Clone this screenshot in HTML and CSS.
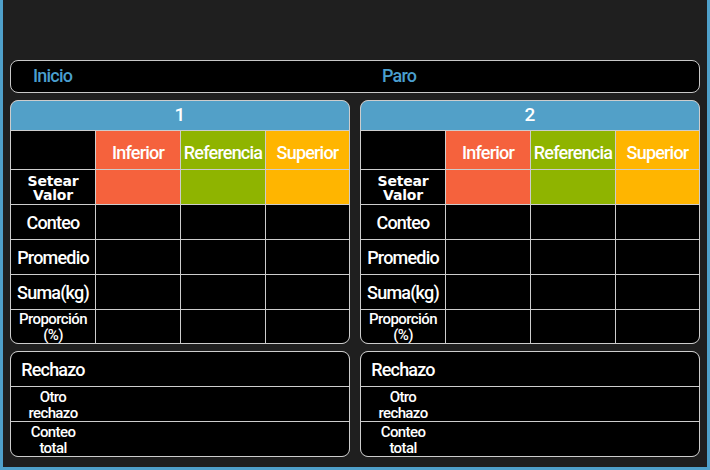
FILE: index.html
```html
<!DOCTYPE html>
<html lang="es">

<head>
    <meta charset="UTF-8">
    <meta name="viewport" content="width=device-width, initial-scale=1.0">
    <title>Panel</title>
    <link rel="stylesheet" href="styles.css">
</head>

<body>
    <div class="frame">
        <div class="topbar">
            <div class="top-item first">Inicio</div>
            <div class="top-item">Paro</div>
        </div>

        <div class="row">
            <div class="panel">
                <div class="head">1</div>
                <div class="grid">
                    <div class="cell"></div>
                    <div class="cell red big">Inferior</div>
                    <div class="cell green big">Referencia</div>
                    <div class="cell yellow big">Superior</div>

                    <div class="cell label small wide">Setear<br>Valor</div>
                    <div class="cell red"></div>
                    <div class="cell green"></div>
                    <div class="cell yellow"></div>

                    <div class="cell label">Conteo</div>
                    <div class="cell"></div>
                    <div class="cell"></div>
                    <div class="cell"></div>

                    <div class="cell label">Promedio</div>
                    <div class="cell"></div>
                    <div class="cell"></div>
                    <div class="cell"></div>

                    <div class="cell label">Suma(kg)</div>
                    <div class="cell"></div>
                    <div class="cell"></div>
                    <div class="cell"></div>

                    <div class="cell label small">Proporción<br>(%)</div>
                    <div class="cell"></div>
                    <div class="cell"></div>
                    <div class="cell"></div>
                </div>
            </div>

            <div class="panel">
                <div class="head">2</div>
                <div class="grid">
                    <div class="cell"></div>
                    <div class="cell red big">Inferior</div>
                    <div class="cell green big">Referencia</div>
                    <div class="cell yellow big">Superior</div>

                    <div class="cell label small wide">Setear<br>Valor</div>
                    <div class="cell red"></div>
                    <div class="cell green"></div>
                    <div class="cell yellow"></div>

                    <div class="cell label">Conteo</div>
                    <div class="cell"></div>
                    <div class="cell"></div>
                    <div class="cell"></div>

                    <div class="cell label">Promedio</div>
                    <div class="cell"></div>
                    <div class="cell"></div>
                    <div class="cell"></div>

                    <div class="cell label">Suma(kg)</div>
                    <div class="cell"></div>
                    <div class="cell"></div>
                    <div class="cell"></div>

                    <div class="cell label small">Proporción<br>(%)</div>
                    <div class="cell"></div>
                    <div class="cell"></div>
                    <div class="cell"></div>
                </div>
            </div>
        </div>

        <div class="row">
            <div class="panel">
                <div class="grid rej">
                    <div class="cell label">Rechazo</div>
                    <div class="cell"></div>
                    <div class="cell label small">Otro<br>rechazo</div>
                    <div class="cell"></div>
                    <div class="cell label small">Conteo<br>total</div>
                    <div class="cell"></div>
                </div>
            </div>
            <div class="panel">
                <div class="grid rej">
                    <div class="cell label">Rechazo</div>
                    <div class="cell"></div>
                    <div class="cell label small">Otro<br>rechazo</div>
                    <div class="cell"></div>
                    <div class="cell label small">Conteo<br>total</div>
                    <div class="cell"></div>
                </div>
            </div>
        </div>
    </div>
</body>

</html>
```

FILE: styles.css
```css
* {
    margin: 0;
    padding: 0;
    box-sizing: border-box;
}

body {
    background-color: rgb(31, 31, 31);
    font-family: Roboto, "Liberation Sans", sans-serif;
    font-weight: 500;
    color: white;
    overflow: hidden;
}

.frame {
    display: flex;
    flex-direction: column;
    gap: 7px;
    width: 710px;
    height: 470px;
    padding: 60px 7px 0 7px;
    border-left: 3px solid rgb(79, 160, 202);
    border-right: 3px solid rgb(79, 160, 202);
    border-bottom: 3px solid rgb(79, 160, 202);
}

.topbar {
    display: flex;
    align-items: center;
    height: 33px;
    background-color: black;
    border: 1px solid rgb(200, 200, 200);
    border-radius: 8px;
}

.top-item {
    padding-left: 22px;
    padding-bottom: 2px;
    font-size: 18px;
    letter-spacing: -0.8px;
    color: rgb(74, 159, 207);
}

.top-item.first {
    width: 349px;
}

.row {
    display: flex;
    gap: 10px;
}

.panel {
    width: 340px;
    background-color: rgb(205, 205, 205);
    border: 1px solid rgb(205, 205, 205);
    border-radius: 8px;
    overflow: hidden;
}

.head {
    height: 30px;
    line-height: 28px;
    text-align: center;
    font-size: 19px;
    background-color: rgb(82, 160, 200);
    border-bottom: 1px solid rgb(205, 205, 205);
}

.grid {
    display: grid;
    grid-template-columns: 84px 84px 84px 1fr;
    grid-template-rows: 38px repeat(4, 34px) 33px;
    gap: 1px;
}

.grid.rej {
    grid-template-columns: 84px 1fr;
    grid-template-rows: repeat(3, 34px);
    column-gap: 0;
}

.cell {
    display: flex;
    align-items: center;
    justify-content: center;
    background-color: black;
    text-align: center;
}

.label {
    font-size: 18px;
    letter-spacing: -0.8px;
}

.label.small {
    font-size: 15px;
    line-height: 16px;
    letter-spacing: -0.6px;
    padding-top: 1px;
}

.label.wide {
    font-family: "DejaVu Sans", sans-serif;
    font-weight: bold;
    font-size: 14px;
    line-height: 14px;
    letter-spacing: -0.2px;
}

.big {
    font-size: 18px;
    letter-spacing: -0.8px;
    padding-top: 4px;
}

.red {
    background-color: rgb(245, 98, 61);
}

.green {
    background-color: rgb(143, 180, 0);
}

.yellow {
    background-color: rgb(255, 181, 0);
}
```
